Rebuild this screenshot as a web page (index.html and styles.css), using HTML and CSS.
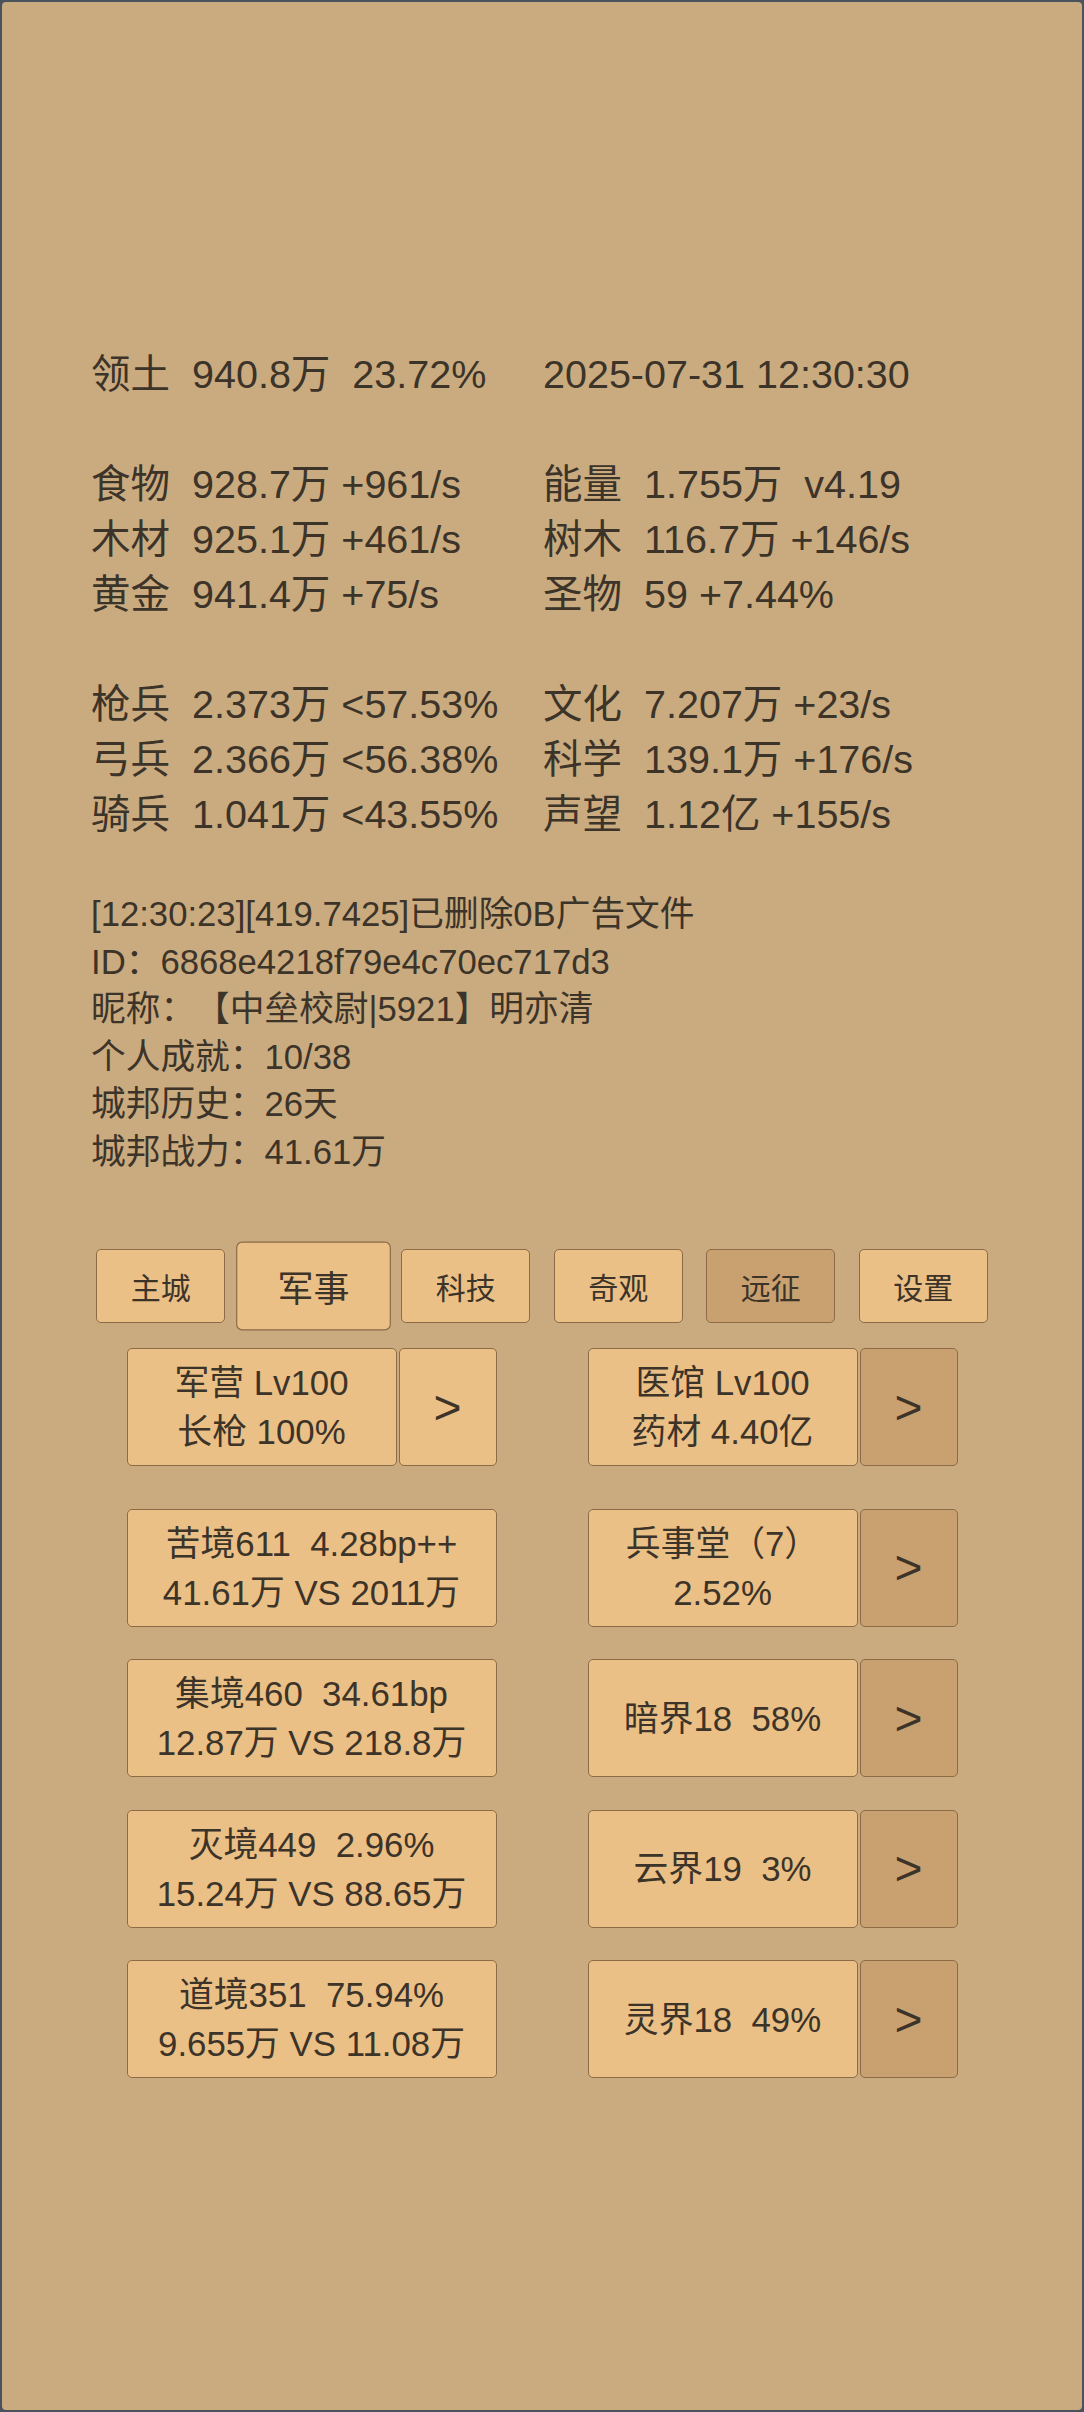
FILE: index.html
```html
<!DOCTYPE html>
<html lang="zh">
<head>
<meta charset="utf-8">
<title>城邦</title>
<link rel="stylesheet" href="styles.css">
</head>
<body>
<div class="frame">
  <div class="stats">
    <div class="cell"><span class="k">领土</span><span class="v">940.8万  23.72%</span></div>
    <div class="cell"><span class="v">2025-07-31 12:30:30</span></div>
    <div class="cell blank"></div><div class="cell blank"></div>
    <div class="cell"><span class="k">食物</span><span class="v">928.7万 +961/s</span></div>
    <div class="cell"><span class="k">能量</span><span class="v">1.755万  v4.19</span></div>
    <div class="cell"><span class="k">木材</span><span class="v">925.1万 +461/s</span></div>
    <div class="cell"><span class="k">树木</span><span class="v">116.7万 +146/s</span></div>
    <div class="cell"><span class="k">黄金</span><span class="v">941.4万 +75/s</span></div>
    <div class="cell"><span class="k">圣物</span><span class="v">59 +7.44%</span></div>
    <div class="cell blank"></div><div class="cell blank"></div>
    <div class="cell"><span class="k">枪兵</span><span class="v">2.373万 &lt;57.53%</span></div>
    <div class="cell"><span class="k">文化</span><span class="v">7.207万 +23/s</span></div>
    <div class="cell"><span class="k">弓兵</span><span class="v">2.366万 &lt;56.38%</span></div>
    <div class="cell"><span class="k">科学</span><span class="v">139.1万 +176/s</span></div>
    <div class="cell"><span class="k">骑兵</span><span class="v">1.041万 &lt;43.55%</span></div>
    <div class="cell"><span class="k">声望</span><span class="v">1.12亿 +155/s</span></div>
  </div>

  <div class="info">
    <div class="line">[12:30:23][419.7425]已删除0B广告文件</div>
    <div class="line">ID：6868e4218f79e4c70ec717d3</div>
    <div class="line">昵称：【中垒校尉|5921】明亦清</div>
    <div class="line">个人成就：10/38</div>
    <div class="line">城邦历史：26天</div>
    <div class="line">城邦战力：41.61万</div>
  </div>

  <nav class="tabs">
    <div class="tab">主城</div>
    <div class="tab active">军事</div>
    <div class="tab">科技</div>
    <div class="tab">奇观</div>
    <div class="tab dark">远征</div>
    <div class="tab">设置</div>
  </nav>

  <div class="grid">
    <div class="group">
      <div class="box main"><div>军营 Lv100</div><div>长枪 100%</div></div>
      <div class="box arrow">&gt;</div>
    </div>
    <div class="group">
      <div class="box main"><div>医馆 Lv100</div><div>药材 4.40亿</div></div>
      <div class="box arrow dark">&gt;</div>
    </div>

    <div class="group first-gap">
      <div class="box wide"><div>苦境611  4.28bp++</div><div>41.61万 VS 2011万</div></div>
    </div>
    <div class="group first-gap">
      <div class="box main"><div>兵事堂（7）</div><div>2.52%</div></div>
      <div class="box arrow dark">&gt;</div>
    </div>

    <div class="group">
      <div class="box wide"><div>集境460  34.61bp</div><div>12.87万 VS 218.8万</div></div>
    </div>
    <div class="group">
      <div class="box main"><div>暗界18  58%</div></div>
      <div class="box arrow dark">&gt;</div>
    </div>

    <div class="group">
      <div class="box wide"><div>灭境449  2.96%</div><div>15.24万 VS 88.65万</div></div>
    </div>
    <div class="group">
      <div class="box main"><div>云界19  3%</div></div>
      <div class="box arrow dark">&gt;</div>
    </div>

    <div class="group">
      <div class="box wide"><div>道境351  75.94%</div><div>9.655万 VS 11.08万</div></div>
    </div>
    <div class="group">
      <div class="box main"><div>灵界18  49%</div></div>
      <div class="box arrow dark">&gt;</div>
    </div>
  </div>
</div>
</body>
</html>
```

FILE: styles.css
```css
html, body {
  margin: 0;
  padding: 0;
  background: #4a525c;
}

.frame {
  box-sizing: border-box;
  width: 1084px;
  height: 2412px;
  border: 2px solid #4a525c;
  border-radius: 6px;
  background: #caab80;
  color: #3c3329;
  font-family: "Liberation Sans", "Noto Sans CJK SC", sans-serif;
  padding-top: 345px;
  overflow: hidden;
  text-spacing-trim: space-all;
}

.stats {
  display: grid;
  grid-template-columns: 452px 1fr;
  padding-left: 89px;
  font-size: 39.5px;
  line-height: 55px;
}

.cell {
  white-space: pre;
  height: 55px;
}

.k {
  margin-right: 22px;
}

.info {
  margin-top: 49px;
  padding-left: 89px;
  font-size: 34.7px;
  line-height: 47.5px;
}

.line {
  white-space: pre;
}

.tabs {
  margin-top: 73px;
  display: flex;
  justify-content: center;
  gap: 23.5px;
}

.tab {
  box-sizing: border-box;
  width: 129px;
  height: 74px;
  border: 1.5px solid #8c6b46;
  border-radius: 5px;
  background: #ebc086;
  display: flex;
  align-items: center;
  justify-content: center;
  font-size: 30px;
}

.tab.active {
  transform: scale(1.2);
}

.tab.dark {
  background: #c9a06f;
}

.grid {
  margin-top: 25px;
  display: grid;
  grid-template-columns: 370px 370px;
  column-gap: 91px;
  row-gap: 32.5px;
  justify-content: center;
}

.group {
  display: flex;
  gap: 2px;
  height: 118px;
}

.group.first-gap {
  margin-top: 10px;
}

.box {
  box-sizing: border-box;
  border: 1.5px solid #8c6b46;
  border-radius: 5px;
  background: #ebc086;
  display: flex;
  flex-direction: column;
  align-items: center;
  justify-content: center;
  font-size: 34.8px;
  line-height: 49px;
  white-space: pre;
}

.box.main {
  width: 270px;
}

.box.wide {
  width: 370px;
}

.box.arrow {
  width: 98px;
  font-size: 48px;
}

.box.dark {
  background: #c9a06f;
}
```
